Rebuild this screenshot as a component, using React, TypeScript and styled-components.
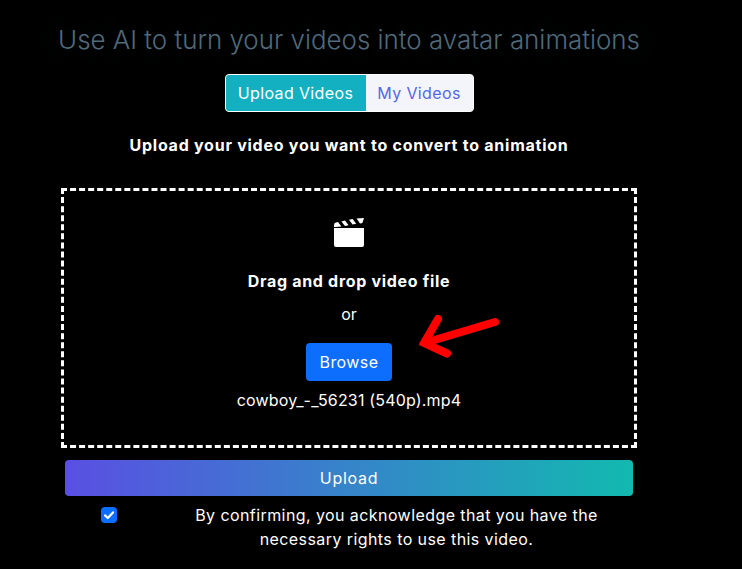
import React from 'react';
import styled, { createGlobalStyle } from 'styled-components';

const FONT = '"Inter", "Liberation Sans", sans-serif';

const GlobalStyle = createGlobalStyle`
  html, body {
    margin: 0;
    height: 100%;
    background: #000;
    overflow: hidden;
  }
`;

const ClapperIcon = () => (
  <svg viewBox='0 0 30 30' width='30' height='30'>
    <path d='M0 10 h30 v17 a2 2 0 0 1 -2 2 h-26 a2 2 0 0 1 -2 -2 z' fill='#fff' />
    <path d='M0 9 V7 a2.4 2.4 0 0 1 2 -2.4 L4 4 L7.4 8.4 L2 9 z' fill='#fff' />
    <path d='M7.4 3.4 L11 2.6 L14.6 7.2 L11 8 z' fill='#fff' />
    <path d='M15 1.8 L18.6 1 L22.2 5.8 L18.6 6.6 z' fill='#fff' />
    <path d='M22.6 .6 L30 0 L28.4 5 L26 5.4 z' fill='#fff' />
  </svg>
);

export default function App() {
  return (
    <>
      <GlobalStyle />
      <Page>
        <Title>Use AI to turn your videos into avatar animations</Title>
        <Tabs>
          <Tab $active>Upload Videos</Tab>
          <Tab>My Videos</Tab>
        </Tabs>
        <Heading>Upload your video you want to convert to animation</Heading>
        <DropZone>
          <ClapperIcon />
          <DropTitle>Drag and drop video file</DropTitle>
          <Or>or</Or>
          <BrowseButton>Browse</BrowseButton>
          <FileName>cowboy_-_56231 (540p).mp4</FileName>
          <Arrow viewBox='0 0 82 50' width='82' height='50'>
            <path
              d='M19 5 L5 29 L28 39.5'
              fill='none'
              stroke='#f00'
              strokeWidth='8'
              strokeLinecap='round'
              strokeLinejoin='miter'
            />
            <path
              d='M7 28.5 L76 8'
              fill='none'
              stroke='#f00'
              strokeWidth='8'
              strokeLinecap='round'
            />
          </Arrow>
        </DropZone>
        <UploadButton>Upload</UploadButton>
        <ConfirmRow>
          <CheckBox>
            <svg viewBox='0 0 16 16' width='16' height='16'>
              <path
                d='M4 8.4 L6.8 11 L12 5.4'
                fill='none'
                stroke='#fff'
                strokeWidth='2.2'
                strokeLinecap='round'
                strokeLinejoin='round'
              />
            </svg>
          </CheckBox>
          <ConfirmText>
            By confirming, you acknowledge that you have the necessary rights to
            use this video.
          </ConfirmText>
        </ConfirmRow>
      </Page>
    </>
  );
}

const Page = styled.div`
  width: 698px;
  height: 569px;
  box-sizing: border-box;
  padding-top: 25px;
  display: flex;
  flex-direction: column;
  align-items: center;
  background: #000;
  font-family: ${FONT};
  color: #fff;
`;

const Title = styled.div`
  font-size: 25.9px;
  font-weight: 300;
  line-height: 30px;
  color: #506a7b;
  white-space: nowrap;
  text-shadow: 0 0 30px rgba(20, 110, 120, 0.45);
`;

const Tabs = styled.div`
  margin-top: 19px;
  display: flex;
  height: 38px;
  box-sizing: border-box;
  border: 1px solid #fff;
  border-radius: 4px;
  overflow: hidden;
  background: #f3f5fb;
`;

const Tab = styled.div<{ $active?: boolean }>`
  display: flex;
  align-items: center;
  justify-content: center;
  width: ${(p) => (p.$active ? '140px' : '107px')};
  font-size: 16px;
  letter-spacing: 0.38px;
  color: ${(p) => (p.$active ? '#fff' : '#5468e8')};
  background: ${(p) => (p.$active ? '#12b0c0' : '#f3f5fb')};
`;

const Heading = styled.div`
  margin-top: 22px;
  font-size: 16px;
  font-weight: 700;
  letter-spacing: 0.75px;
  line-height: 22px;
  white-space: nowrap;
`;

const DropZone = styled.div`
  position: relative;
  margin-top: 32px;
  width: 576px;
  height: 260px;
  box-sizing: border-box;
  border: 3px dashed #fff;
  padding-top: 27px;
  display: flex;
  flex-direction: column;
  align-items: center;
`;

const DropTitle = styled.div`
  margin-top: 22px;
  font-size: 16px;
  font-weight: 700;
  letter-spacing: 0.7px;
  line-height: 22px;
`;

const Or = styled.div`
  margin-top: 11px;
  font-size: 16px;
  line-height: 22px;
`;

const BrowseButton = styled.button`
  margin-top: 18px;
  width: 86px;
  height: 38px;
  border: none;
  border-radius: 4px;
  background: #0d6efd;
  color: #fff;
  font-family: inherit;
  font-size: 16px;
  letter-spacing: 0.4px;
`;

const FileName = styled.div`
  margin-top: 8px;
  font-size: 16px;
  letter-spacing: 0.18px;
  line-height: 22px;
  white-space: nowrap;
`;

const Arrow = styled.svg`
  position: absolute;
  left: 355px;
  top: 123px;
`;

const UploadButton = styled.button`
  margin-top: 12px;
  width: 568px;
  height: 36px;
  border: none;
  border-radius: 4px;
  background: linear-gradient(90deg, #5a4fe3 0%, #12b9b0 100%);
  color: #fff;
  font-family: inherit;
  font-size: 16px;
  letter-spacing: 0.7px;
`;

const ConfirmRow = styled.div`
  margin-top: 7px;
  width: 568px;
  padding-left: 36px;
  box-sizing: border-box;
  display: flex;
  align-items: flex-start;
`;

const CheckBox = styled.span`
  flex: none;
  margin-top: 4px;
  width: 16px;
  height: 16px;
  border-radius: 4px;
  background: #0d6efd;
  display: flex;
`;

const ConfirmText = styled.div`
  flex: 1;
  padding: 0 17px 0 60px;
  font-size: 16px;
  letter-spacing: 0.42px;
  line-height: 24px;
  text-align: center;
`;
